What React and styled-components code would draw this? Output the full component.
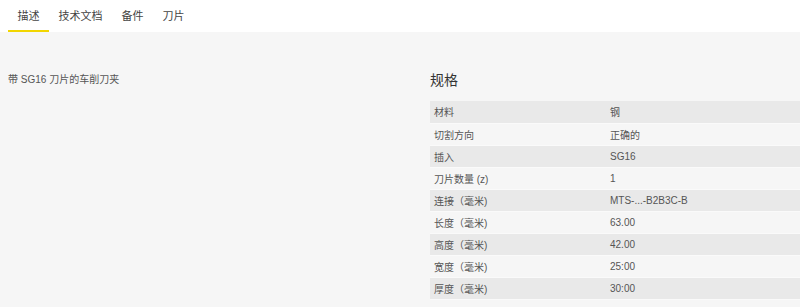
import React, { useState } from "react";
import styled, { createGlobalStyle } from "styled-components";

const GlobalStyle = createGlobalStyle`
  html, body {
    margin: 0;
    padding: 0;
    background: #f6f6f6;
    font-family: "Liberation Sans", "Noto Sans CJK SC", sans-serif;
    color: #555;
  }
`;

const tabs = ["描述", "技术文档", "备件", "刀片"];

const specs = [
  ["材料", "钢"],
  ["切割方向", "正确的"],
  ["插入", "SG16"],
  ["刀片数量 (z)", "1"],
  ["连接（毫米)", "MTS-...-B2B3C-B"],
  ["长度（毫米)", "63.00"],
  ["高度（毫米)", "42.00"],
  ["宽度（毫米)", "25:00"],
  ["厚度（毫米)", "30:00"],
];

const App = () => {
  const [active, setActive] = useState(0);

  return (
    <>
      <GlobalStyle />
      <TabBar>
        {tabs.map((t, i) => (
          <Tab key={t} $active={i === active} onClick={() => setActive(i)}>
            {t}
          </Tab>
        ))}
      </TabBar>
      <Content>
        <Description>带 SG16 刀片的车削刀夹</Description>
        <SpecColumn>
          <Heading>规格</Heading>
          <SpecTable>
            <tbody>
              {specs.map(([k, v], i) => (
                <SpecRow key={k} $shaded={i % 2 === 0}>
                  <LabelCell>{k}</LabelCell>
                  <ValueCell>{v}</ValueCell>
                </SpecRow>
              ))}
            </tbody>
          </SpecTable>
        </SpecColumn>
      </Content>
    </>
  );
};

const TabBar = styled.div`
  display: flex;
  background: #fff;
  height: 32px;
  padding-left: 8px;
`;

const Tab = styled.button`
  background: none;
  border: none;
  border-bottom: 2px solid ${(p) => (p.$active ? "#f2d600" : "transparent")};
  padding: 0 9.5px;
  height: 32px;
  font-family: inherit;
  font-size: 11px;
  color: #444;
  cursor: pointer;
`;

const Content = styled.div`
  display: grid;
  grid-template-columns: 422px 1fr;
  padding: 0 0 0 8px;
`;

const Description = styled.p`
  margin: 0;
  padding-top: 42px;
  font-size: 10px;
  line-height: 12px;
  color: #555;
`;

const SpecColumn = styled.div`
  display: flex;
  flex-direction: column;
`;

const Heading = styled.h2`
  margin: 0;
  padding-top: 38px;
  padding-bottom: 11px;
  font-size: 14px;
  font-weight: normal;
  line-height: 20px;
  color: #333;
`;

const SpecTable = styled.table`
  border-collapse: collapse;
  width: 100%;
  font-size: 10px;
`;

const SpecRow = styled.tr`
  background: ${(p) => (p.$shaded ? "#e9e9e9" : "transparent")};
  border-bottom: 1px solid #fafafa;
  height: 22px;
`;

const LabelCell = styled.td`
  padding: 0 0 0 4px;
  width: 176px;
`;

const ValueCell = styled.td`
  padding: 0;
`;

export default App;
